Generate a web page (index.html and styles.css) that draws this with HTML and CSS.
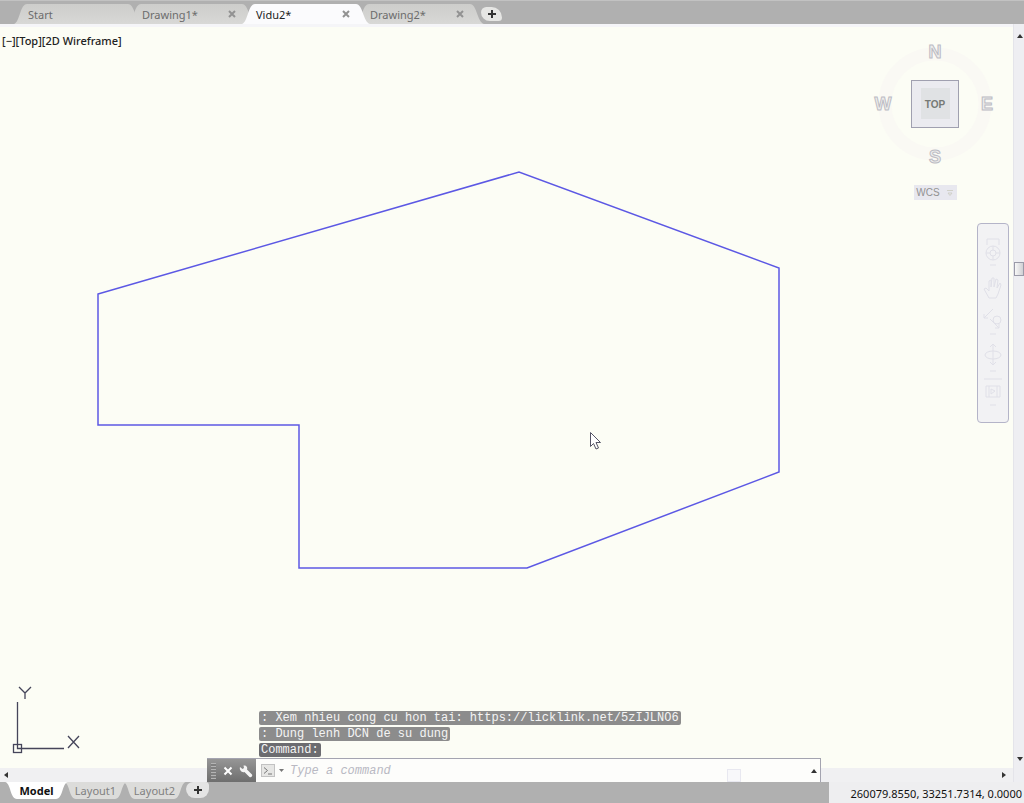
FILE: index.html
```html
<!DOCTYPE html>
<html lang="en">
  <head>
    <meta charset="UTF-8" />
    <meta name="viewport" content="width=device-width, initial-scale=1.0" />
    <title>Vidu2</title>
    <link rel="stylesheet" href="styles.css">
  </head>
  <body>
    <!---------Open files----------->
    <header class="file-tabs">
      <div class="file-tab">
        <button class="tab-name">Start</button>
      </div>
      <div class="file-tab">
        <button class="tab-name">Drawing1*</button>
        <button class="tab-close" aria-label="Close Drawing1">
          <svg width="8" height="8" viewBox="0 0 8 8"><path d="M1 1L7 7M7 1L1 7" /></svg>
        </button>
      </div>
      <div class="file-tab active">
        <button class="tab-name">Vidu2*</button>
        <button class="tab-close" aria-label="Close Vidu2">
          <svg width="8" height="8" viewBox="0 0 8 8"><path d="M1 1L7 7M7 1L1 7" /></svg>
        </button>
      </div>
      <div class="file-tab">
        <button class="tab-name">Drawing2*</button>
        <button class="tab-close" aria-label="Close Drawing2">
          <svg width="8" height="8" viewBox="0 0 8 8"><path d="M1 1L7 7M7 1L1 7" /></svg>
        </button>
      </div>
      <button class="new-file" aria-label="New drawing">
        <svg width="8" height="8" viewBox="0 0 8 8"><path d="M4 0V8M0 4H8" /></svg>
      </button>
    </header>

    <main class="workspace">
      <div class="canvas">
        <div class="view-controls">
          <button>[−]</button><button>[Top]</button><button>[2D Wireframe]</button>
        </div>

        <svg class="model" width="100%" height="100%">
          <polygon points="98,270 519,148 779,244 779,448 527,544 299,544 299,401 98,401" />
        </svg>

        <!-- view cube -->
        <div class="view-cube">
          <svg width="128" height="136" viewBox="0 0 128 136">
            <circle class="ring" cx="64" cy="68" r="50" />
            <text class="compass" x="64" y="22">N</text>
            <text class="compass" x="12" y="74">W</text>
            <text class="compass" x="116" y="74">E</text>
            <text class="compass" x="64" y="127">S</text>
            <rect class="face" x="40.5" y="44.5" width="47" height="47" />
            <rect class="face-inner" x="50" y="52" width="29" height="31" />
            <text class="face-name" x="64" y="72">TOP</text>
          </svg>
          <button class="wcs">
            WCS
            <svg width="8" height="8" viewBox="0 0 8 8"><path d="M1 1.5H7M2 4H6L4 6.500Z" /></svg>
          </button>
        </div>

        <!-- navigation bar -->
        <nav class="nav-bar">
          <button aria-label="Full navigation wheel">
            <svg width="24" height="34" viewBox="0 0 24 34">
              <path d="M6 3H18M6 3V9M18 3V9" />
              <circle cx="12" cy="17" r="7" />
              <circle cx="12" cy="17" r="3" />
              <path d="M12 10V14M12 20V24M5 17H9M15 17H19M9 29H15" />
            </svg>
          </button>
          <button aria-label="Pan">
            <svg width="24" height="28" viewBox="0 0 24 28">
              <path d="M8 24L3 15L5 14L8 17V7L10 6V13L11 4H13V13L15 5L17 6L16 14L19 9L20 11L17 20L15 24Z" />
            </svg>
          </button>
          <button aria-label="Zoom extents">
            <svg width="24" height="30" viewBox="0 0 24 30">
              <path d="M3 12L12 3M3 12V8M3 12H7M18 22L9 13M18 22V18M18 22H14" />
              <circle cx="16" cy="14" r="4" />
              <path d="M9 28H15" />
            </svg>
          </button>
          <button aria-label="Orbit">
            <svg width="24" height="34" viewBox="0 0 24 34">
              <path d="M12 4V25M9 7L12 4L15 7M9 22L12 25L15 22" />
              <ellipse cx="12" cy="15" rx="8" ry="4" />
              <path d="M9 31H15" />
            </svg>
          </button>
          <button aria-label="ShowMotion">
            <svg width="24" height="32" viewBox="0 0 24 32">
              <path d="M3 1H21M5 8H19V19H5ZM8 8V19M16 8V19M10 11L14 13L10 16ZM9 27H15" />
            </svg>
          </button>
        </nav>

        <!-- UCS icon -->
        <svg class="ucs" width="84" height="76" viewBox="0 0 84 76">
          <path d="M17.500 21V63M22 67.500H64" />
          <rect x="13.500" y="63.500" width="8" height="8" />
          <path d="M17.500 63V67.500H22" />
          <path d="M19 6L25 12L31 6M25 12V18" />
          <path d="M68 55L79 67M79 55L68 67" />
        </svg>

        <svg class="cursor" width="14" height="20" viewBox="0 0 14 20">
          <path d="M1.500 1.500V15.500L4.500 12.500L7 18L9.500 17L7 11.500H11.500Z" />
        </svg>
      </div>

      <div class="v-scroll">
        <button class="scroll-arrow" aria-label="Scroll up">
          <svg width="8" height="6" viewBox="0 0 8 6"><path d="M1 5H7L4 1Z" /></svg>
        </button>
        <div class="v-thumb"></div>
        <button class="scroll-arrow" aria-label="Scroll down">
          <svg width="8" height="6" viewBox="0 0 8 6"><path d="M1 1H7L4 5Z" /></svg>
        </button>
      </div>

      <div class="h-scroll">
        <button class="scroll-arrow" aria-label="Scroll left">
          <svg width="6" height="8" viewBox="0 0 6 8"><path d="M5 1V7L1 4Z" /></svg>
        </button>
        <button class="scroll-arrow" aria-label="Scroll right">
          <svg width="6" height="8" viewBox="0 0 6 8"><path d="M1 1V7L5 4Z" /></svg>
        </button>
      </div>

      <!---------Command window floats over the drawing----------->
      <section class="command-window">
        <div class="history">
          <p>: Xem nhieu cong cu hon tai: https://licklink.net/5zIJLNO6</p>
          <p>: Dung lenh DCN de su dung</p>
          <p class="latest">Command:</p>
        </div>
        <div class="command-line">
          <div class="command-tools">
            <span class="grip"></span>
            <button aria-label="Close command line">
              <svg width="10" height="10" viewBox="0 0 10 10"><path d="M1.500 1.500L8.500 8.500M8.500 1.500L1.500 8.500" /></svg>
            </button>
            <button aria-label="Customize">
              <svg width="14" height="14" viewBox="0 0 14 14">
                <path class="wrench" d="M1 3L3.500 5L5 4L4.500 1.500C7 1 9 3 8 5.500L13 10.500C14 12 12 14 10.500 13L5.500 8C3 9 0 6 1 3Z" />
              </svg>
            </button>
          </div>
          <button class="recent" aria-label="Recent commands">
            <svg width="24" height="14" viewBox="0 0 24 14">
              <rect class="box" x="0.500" y="0.500" width="13" height="12" />
              <path class="prompt" d="M3 3.500L6.500 6.500L3 9.500M7 10H11" />
              <path class="arrow" d="M18 5H23L20.500 8Z" />
            </svg>
          </button>
          <input type="text" class="command-input" placeholder="Type a command" aria-label="Command" />
          <span class="h-thumb"></span>
          <button class="expand" aria-label="Show history">
            <svg width="8" height="6" viewBox="0 0 8 6"><path d="M1 5H7L4 1Z" /></svg>
          </button>
        </div>
      </section>
    </main>

    <footer class="status">
      <div class="layout-tabs">
        <button class="layout-tab current">Model</button>
        <button class="layout-tab">Layout1</button>
        <button class="layout-tab">Layout2</button>
        <button class="new-layout" aria-label="New layout">
          <svg width="8" height="8" viewBox="0 0 8 8"><path d="M4 0V8M0 4H8" /></svg>
        </button>
      </div>
      <div class="coordinates">260079.8550, 33251.7314, 0.0000</div>
    </footer>
  </body>
</html>
```
FILE: styles.css
```css
* {
  box-sizing: border-box;
}
body {
  margin: 0;
  height: 100vh;
  display: flex;
  flex-direction: column;
  overflow: hidden;
  background-color: #b0b0b0;
  font-family: "Noto Sans", "Open Sans", sans-serif;
  font-size: 11px;
  color: #222;
}
button {
  margin: 0;
  padding: 0;
  border: none;
  background: none;
  font: inherit;
  color: inherit;
}
svg {
  display: block;
  fill: none;
  stroke: #333;
}

/* file tabs */
.file-tabs {
  display: flex;
  height: 24px;
  padding: 3px 0 0 14px;
  border-top: 1px solid #c2c2c2;
}
.file-tab {
  display: flex;
  align-items: center;
  justify-content: space-between;
  width: 128px;
  margin-right: -14px;
  padding: 0 20px 0 14px;
  background: linear-gradient(#cdcdcb, #d8d8d6);
  color: #6c6c6c;
  clip-path: path("M0 20C6 18 6 0 13 0H114C121 0 121 18 128 20Z");
}
.file-tab.active {
  z-index: 1;
  background: #fbfbfd;
  color: #222;
}
.tab-close svg {
  stroke: #929292;
  stroke-width: 2;
}
.new-file {
  align-self: center;
  display: grid;
  place-items: center;
  width: 21px;
  height: 14px;
  margin-left: 11px;
  border-radius: 6px 12px 4px 10px;
  background-color: #e6e6e4;
}
.new-file svg,
.new-layout svg {
  stroke-width: 2;
}

/* drawing area */
.workspace {
  flex: 1;
  min-height: 0;
  position: relative;
  display: grid;
  grid-template-columns: 1fr 11px;
  grid-template-rows: 1fr 14px;
}
.canvas {
  position: relative;
  overflow: hidden;
  background-color: #fcfdf5;
  border-top: 3px solid #f5f5f8;
}
.view-controls {
  position: absolute;
  left: 2px;
  top: 6px;
  font-weight: 500;
  line-height: 15px;
}
.model {
  position: absolute;
  left: 0;
  top: -3px;
}
.model polygon {
  stroke: #5c58e4;
  stroke-width: 1.5;
}
.view-cube {
  position: absolute;
  top: 9px;
  right: 14px;
  display: flex;
  flex-direction: column;
  align-items: center;
  gap: 13px;
}
.ring {
  stroke: #faf9f4;
  stroke-width: 13;
}
.compass {
  font-family: "Liberation Sans", sans-serif;
  font-size: 18px;
  font-weight: bold;
  text-anchor: middle;
  fill: #eeeeec;
  stroke: #bcbcc4;
}
.face {
  fill: #ebebf0;
  stroke: #a0a0b0;
}
.face-inner {
  fill: #e0e2e4;
  stroke: none;
}
.face-name {
  font-family: "Liberation Sans", sans-serif;
  font-size: 10px;
  font-weight: bold;
  text-anchor: middle;
  fill: #767a76;
  stroke: none;
}
.wcs {
  display: flex;
  align-items: center;
  justify-content: center;
  gap: 6px;
  width: 43px;
  height: 15px;
  background-color: #e8e8ef;
  color: #929292;
  font-family: "Liberation Sans", sans-serif;
  font-size: 10px;
}
.wcs svg {
  stroke: #d0d0c8;
}
.nav-bar {
  position: absolute;
  top: 196px;
  right: 4px;
  display: flex;
  flex-direction: column;
  align-items: center;
  justify-content: space-between;
  width: 32px;
  height: 200px;
  padding: 12px 0;
  border: 1px solid #b4b4c8;
  border-radius: 4px;
  background-color: #f2f2f4;
}
.nav-bar svg {
  stroke: #e0e0e8;
}
.ucs {
  position: absolute;
  left: 0;
  bottom: 11px;
}
.ucs path,
.ucs rect {
  stroke: #45455a;
  stroke-width: 1.3;
}
.cursor {
  position: absolute;
  left: 589px;
  top: 404px;
  fill: #fff;
  stroke: #555566;
}

/* scroll bars */
.v-scroll {
  grid-row: 1 / 3;
  grid-column: 2;
  display: flex;
  flex-direction: column;
  align-items: flex-end;
  padding: 9px 0 20px;
  border-left: 1px solid #e4e4ea;
  background-color: #eeeef2;
}
.v-thumb {
  width: 100%;
  height: 14px;
  margin: 223px 0 auto;
  border: 1px solid #9a9aa8;
  background: linear-gradient(90deg, #f8f8f8, #d0d0d4);
}
.h-scroll {
  display: flex;
  align-items: center;
  justify-content: space-between;
  padding: 0 6px 0 3px;
  background-color: #f0f0f2;
}
.scroll-arrow svg,
.expand svg {
  fill: #333;
  stroke: none;
}

/* command window */
.command-window {
  position: absolute;
  left: 207px;
  right: 203px;
  bottom: 0;
  font-family: "Liberation Mono", monospace;
  font-size: 12px;
}
.history {
  display: flex;
  flex-direction: column;
  align-items: flex-start;
  gap: 2px;
  margin: 0 0 1px 52px;
}
.history p {
  margin: 0;
  padding: 0 2px;
  border-radius: 2px;
  background-color: #8c8c8c;
  color: #f4f4f4;
  line-height: 14px;
}
.history .latest {
  background-color: #6c6c70;
}
.command-line {
  display: flex;
  align-items: center;
  height: 24px;
  border: 1px solid #a4a4b0;
  border-bottom: none;
  border-left: none;
  background-color: #fdfdfb;
}
.command-tools {
  display: flex;
  align-items: center;
  justify-content: space-between;
  align-self: stretch;
  width: 49px;
  padding: 0 3px 0 4px;
  background: linear-gradient(#969696, #6e6e6e);
}
.command-tools svg {
  stroke: #fff;
  stroke-width: 2;
}
.command-tools .wrench {
  fill: #f4f4f4;
  stroke: none;
}
.grip {
  width: 5px;
  height: 16px;
  background: repeating-linear-gradient(#b4b4b4 0 1px, #808080 1px 3px);
}
.recent {
  margin: 0 5px;
}
.recent .box {
  fill: #e6e6e4;
  stroke: #c2c2c2;
}
.recent .prompt {
  stroke: #777;
}
.recent .arrow {
  fill: #777;
  stroke: none;
}
.command-input {
  flex: 1;
  min-width: 0;
  padding: 0;
  border: none;
  outline: none;
  background: none;
  font: inherit;
}
.command-input::placeholder {
  color: #b9b9c3;
  font-style: italic;
}
.h-thumb {
  align-self: flex-end;
  width: 14px;
  height: 13px;
  margin-right: 69px;
  border: 1px solid #e8e8f0;
  background-color: #f8f8fa;
}
.expand {
  margin-right: 2px;
}

/* layout tabs and coordinates */
.status {
  display: flex;
  justify-content: space-between;
  height: 21px;
}
.layout-tabs {
  display: flex;
  height: 17px;
  padding-left: 5px;
}
.layout-tab {
  width: 63px;
  margin-right: -4px;
  background-color: #dcdcda;
  color: #808080;
  clip-path: path("M0 0C6 1 5 17 12 17H51C58 17 57 1 63 0Z");
}
.layout-tab.current {
  z-index: 1;
  background-color: #fff;
  color: #111;
  font-weight: bold;
}
.new-layout {
  display: grid;
  place-items: center;
  width: 23px;
  height: 16px;
  margin-left: 4px;
  border-radius: 8px 4px 10px 10px;
  background-color: #e4e4e4;
}
.coordinates {
  width: 195px;
  padding: 0 2px 0 0;
  background-color: #eeeef0;
  color: #111;
  line-height: 24px;
  text-align: right;
  white-space: nowrap;
}
```
